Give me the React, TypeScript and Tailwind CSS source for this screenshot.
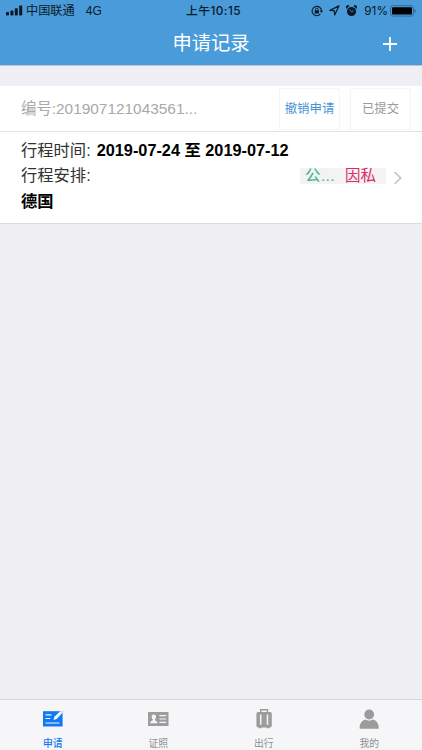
import type { ReactNode } from 'react';
import clsx from 'clsx';

function StatusBar() {
  return (
    <div className="grid h-[22px] grid-cols-3 items-center pl-1.5 pr-[6px] text-[11.5px] leading-none text-[#0b1a28]">
      <div className="flex items-center">
        <svg width="17" height="11" viewBox="0 0 17 11" fill="currentColor">
          <rect x="0" y="7" width="3" height="3.5" rx="0.8" />
          <rect x="4.4" y="5.5" width="3" height="5" rx="0.8" />
          <rect x="8.8" y="3.3" width="3" height="7.2" rx="0.8" />
          <rect x="13.2" y="0.5" width="3" height="10" rx="0.8" />
        </svg>
        <span className="ml-[3px] whitespace-nowrap pt-px text-[12.2px]">中国联通</span>
        <span className="ml-[11px] text-[12px]">4G</span>
      </div>
      <div className="whitespace-nowrap pl-[5px] pt-[2px] text-center font-['Inter','Noto_Sans_CJK_SC',sans-serif] text-[11.8px] font-medium tracking-[0.45px]">上午10:15</div>
      <div className="flex items-center justify-end">
        <svg width="12" height="12" viewBox="0 0 12 12" fill="none" stroke="currentColor" strokeWidth="1.1">
          <path d="M9.3 9.2A4.7 4.7 0 1 1 10.5 6" />
          <path d="M8.8 5.8h3.2L10.4 7.9z" fill="currentColor" stroke="none" />
          <rect x="3.7" y="5.2" width="4.2" height="3.3" fill="currentColor" stroke="none" />
          <path d="M4.5 5.3V4.4a1.3 1.3 0 0 1 2.6 0v.9" strokeWidth="0.9" />
        </svg>
        <svg className="ml-1.5" width="11" height="11" viewBox="0 0 11 11" fill="none" stroke="currentColor" strokeWidth="1.2" strokeLinejoin="round">
          <path d="M9.9.9.9 5.4l4.4.3.4 4.3z" />
        </svg>
        <svg className="ml-[6px]" width="11" height="12" viewBox="0 0 11 12" fill="currentColor">
          <circle cx="5.5" cy="6.5" r="4.6" />
          <path d="M.4 3.7A2 2 0 0 1 3.5.9zM10.6 3.7A2 2 0 0 0 7.5.9z" />
          <path d="M3.6 4.6 5.5 6.7 7.6 5.7" fill="none" stroke="#499bd9" strokeWidth="0.8" />
        </svg>
        <span className="ml-[7px] pt-px font-['Inter',sans-serif] text-[11.8px]">91%</span>
        <svg className="ml-[2px]" width="26" height="12" viewBox="0 0 26 12">
          <rect x="0.5" y="0.7" width="23" height="10.4" rx="2.4" fill="none" stroke="#2e6590" strokeWidth="0.9" />
          <rect x="2" y="2.2" width="20" height="7.4" rx="1" fill="#000" />
          <path d="M24.5 4.2c1.6.5 1.6 3 0 3.5z" fill="#2e6590" />
        </svg>
      </div>
    </div>
  );
}

function Header() {
  return (
    <header className="h-[66px] shrink-0 border-b border-[#b3c9df] bg-[#499bd9]">
      <StatusBar />
      <div className="grid h-[43px] grid-cols-[1fr_auto_1fr] items-center">
        <span />
        <h1 className="text-[19.3px] leading-none text-white">申请记录</h1>
        <button className="mr-[24px] justify-self-end text-white" aria-label="新增">
          <svg width="16" height="16" viewBox="0 0 16 16" stroke="currentColor" strokeWidth="1.8">
            <path d="M8 1v14M1 8h14" />
          </svg>
        </button>
      </div>
    </header>
  );
}

function RecordCard() {
  return (
    <section className="mt-5 h-[138px] border-b border-[#dcdce0] bg-white">
      <div className="flex h-[46px] items-center border-b border-[#e2e2e4] pl-[21px] pr-[11px]">
        <p className="flex-1 text-[15.4px] leading-none text-[#a9a9a9]">编号:201907121043561...</p>
        <button className="h-[42px] w-[61px] whitespace-nowrap border border-[#f5f6f8] pt-0.5 text-[12.4px] text-[#4795d5]">撤销申请</button>
        <button className="ml-[10px] h-[42px] w-[61px] border border-[#f5f5f5] pt-0.5 text-[12.4px] text-[#999]">已提交</button>
      </div>
      <div className="pl-[21px] pr-[19px] pt-[5.6px] text-[16.3px] leading-[25.6px] text-[#333]">
        <p className="whitespace-nowrap">
          行程时间: <b className="ml-[1.5px] text-black">2019-07-24 至 2019-07-12</b>
        </p>
        <div className="flex items-center">
          <span className="flex-1">行程安排:</span>
          <span className="flex h-4 w-[86px] items-center bg-[#f3f3f3] text-[15.5px] leading-none">
            <span className="ml-[5px] w-[40px] tracking-[0.4px] text-[#37b483]">公...</span>
            <span className="text-[#db2a68]">因私</span>
          </span>
          <svg className="ml-[7px] mt-1" width="10" height="14" viewBox="0 0 10 14" fill="none" stroke="#c5c5ca" strokeWidth="1.7">
            <path d="M1.5 1 7.7 7 1.5 13" />
          </svg>
        </div>
        <p className="font-bold text-black">德国</p>
      </div>
    </section>
  );
}

const tabs: { label: string; active?: boolean; icon: ReactNode }[] = [
  {
    label: '申请',
    active: true,
    icon: (
      <>
        <path fill="currentColor" d="M2 4.2h19.6v15.3H2z" />
        <path d="M4.5 7.8h6M4.5 11.5h4.8M4.5 16h14" stroke="#f6f6f8" strokeWidth="1.2" />
        <path fill="#f6f6f8" d="m12.6 13 .8-3.2L19.2 4.2h2.4v1.6L15.6 12z" />
      </>
    ),
  },
  {
    label: '证照',
    icon: (
      <>
        <path fill="currentColor" d="M2 5h20.5v14H2z" />
        <path fill="#f6f6f8" d="M7.8 7.4c-1.6 0-2.3 1.1-2.1 2.7.1 1.2.6 1.9 1.1 2.4v.8c-1.1.5-2.6.9-2.6 2.9h7.3c0-2-1.5-2.4-2.6-2.9v-.8c.5-.5 1-1.2 1.1-2.4.2-1.6-.6-2.7-2.2-2.7z" />
        <path d="M13.4 8.7h6.8M13.4 12h6.8M13.4 15.3h6.8" stroke="#f6f6f8" strokeWidth="1.2" />
      </>
    ),
  },
  {
    label: '出行',
    icon: (
      <>
        <path d="M8.7 5.2V2.8h6.8v2.4" fill="none" stroke="currentColor" strokeWidth="1.4" />
        <rect x="4.4" y="5" width="15.4" height="15.6" rx="1.8" fill="currentColor" />
        <path d="M6.8 20h2.6v1.3H6.8zM14.8 20h2.6v1.3h-2.6z" fill="currentColor" />
        <path d="M8.7 7.5v10.3M15.5 7.5v10.3" stroke="#f6f6f8" strokeWidth="1.5" />
      </>
    ),
  },
  {
    label: '我的',
    icon: (
      <path
        fill="currentColor"
        d="M12.2 2.6a4.9 4.9 0 1 1 0 9.8 4.9 4.9 0 0 1 0-9.8zM8.4 12.5c2.2 1.5 5.4 1.5 7.6 0 3.5 1 5.7 4 5.7 8v1.2h-19v-1.2c0-4 2.2-7 5.7-8z"
      />
    ),
  },
];

function TabBar() {
  return (
    <nav className="grid h-[51px] shrink-0 grid-cols-4 border-t border-[#d6d6dc] bg-[#f6f6f8]">
      {tabs.map(tab => (
        <button
          key={tab.label}
          className={clsx('flex flex-col items-center pt-[7px]', tab.active ? 'font-medium text-[#1279f4]' : 'text-[#8f8f8f]')}
        >
          <svg className={clsx(!tab.active && 'text-[#9c9c9c]')} width="24" height="24" viewBox="0 0 24 24">{tab.icon}</svg>
          <span className="mt-[8px] text-[9.8px] leading-none">{tab.label}</span>
        </button>
      ))}
    </nav>
  );
}

export default function App() {
  return (
    <div className="flex h-[750px] w-[422px] flex-col overflow-hidden bg-[#eeeef3] font-['Liberation_Sans','Noto_Sans_CJK_SC',sans-serif]">
      <Header />
      <main className="flex-1">
        <RecordCard />
      </main>
      <TabBar />
    </div>
  );
}
